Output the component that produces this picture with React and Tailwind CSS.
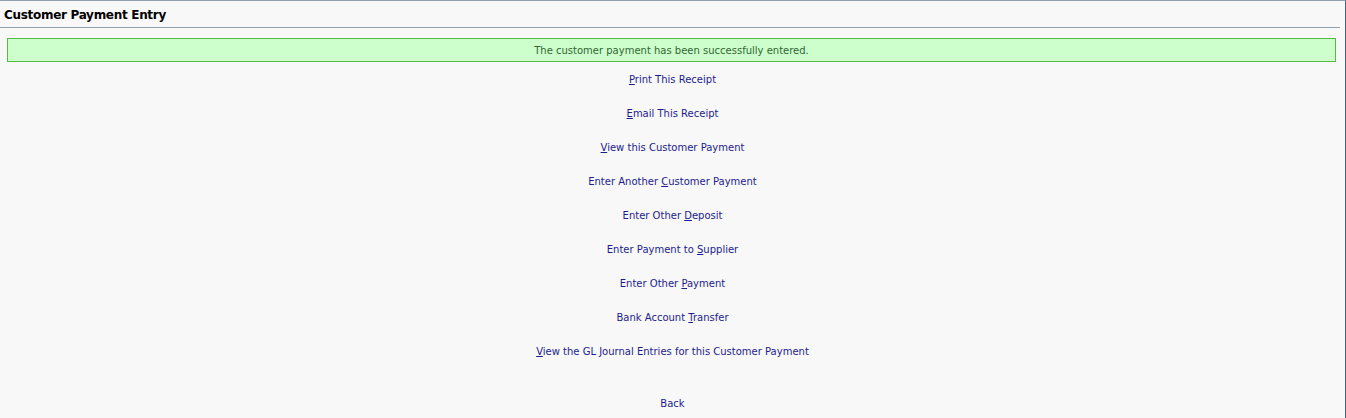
import React from "react";

const links = [
  ["P", "rint This Receipt", ""],
  ["E", "mail This Receipt", ""],
  ["V", "iew this Customer Payment", ""],
  ["", "", "Enter Another |C|ustomer Payment"],
  ["", "", "Enter Other |D|eposit"],
  ["", "", "Enter Payment to |S|upplier"],
  ["", "", "Enter Other |P|ayment"],
  ["", "", "Bank Account |T|ransfer"],
  ["V", "iew the GL Journal Entries for this Customer Payment", ""],
];

function Label({ item }) {
  const [a, b, c] = item;
  if (c) {
    const [pre, u, post] = c.split("|");
    return (
      <>
        {pre}
        <span className="underline">{u}</span>
        {post}
      </>
    );
  }
  return (
    <>
      <span className="underline">{a}</span>
      {b}
    </>
  );
}

export default function App() {
  return (
    <div
      className="w-[1346px] h-[418px] bg-[#f8f8f8] border-t border-t-[#8ea0b0] border-r border-r-[#4a6078] overflow-hidden"
      style={{ fontFamily: '"DejaVu Sans", Verdana, sans-serif' }}
    >
      <div className="pr-[5px]">
        <div className="h-[27px] flex items-center pl-[4px] pt-[1px] text-[12px] tracking-[-0.3px] font-bold text-black border-b border-b-[#8ea0b0]">
          Customer Payment Entry
        </div>
      </div>
      <div className="mt-[10px] ml-[7px] mr-[9px] h-[24px] bg-[#ccffcc] border border-[#55bb44] flex items-center justify-center text-[10px] text-[#336633]">
        The customer payment has been successfully entered.
      </div>
      <div className="flex flex-col items-center text-[10px] text-[#1c1c8c] pt-[11px]">
        {links.map((l, i) => (
          <a key={i} href="#" className="h-[34px] leading-[14px] no-underline">
            <Label item={l} />
          </a>
        ))}
        <a href="#" className="mt-[18px] leading-[14px]">Back</a>
      </div>
    </div>
  );
}
